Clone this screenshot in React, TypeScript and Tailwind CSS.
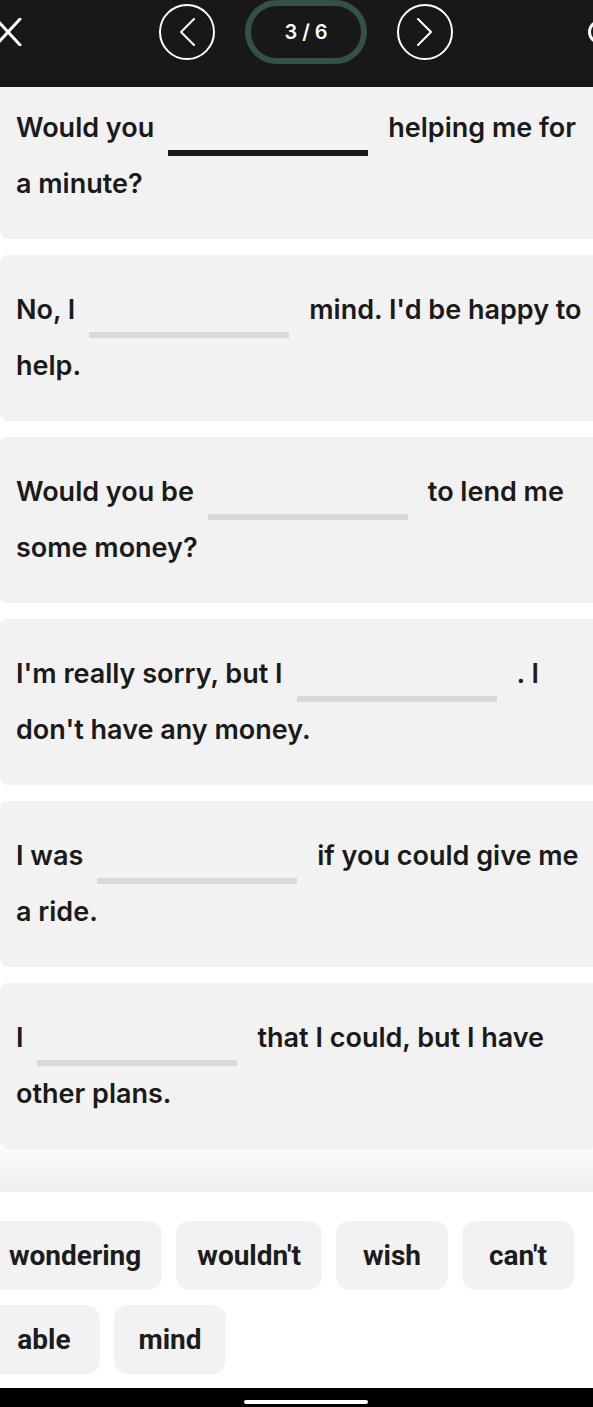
const sentences = [
  { before: "Would you", after: "helping me for", next: "a minute?", active: true },
  { before: "No, I", after: "mind. I'd be happy to", next: "help.", active: false },
  { before: "Would you be", after: "to lend me", next: "some money?", active: false },
  { before: "I'm really sorry, but I", after: ". I", next: "don't have any money.", active: false },
  { before: "I was", after: "if you could give me", next: "a ride.", active: false },
  { before: "I", after: "that I could, but I have", next: "other plans.", active: false },
];

const words = ["wondering", "wouldn't", "wish", "can't", "able", "mind"];

const App = () => {
  return (
    <div className="w-full overflow-hidden bg-white">
      <div className="w-[650px] -ml-[19px]">
        {/* Top bar */}
        <div className="h-[87px] bg-[#181818] overflow-hidden">
          <div className="h-[62px] grid grid-cols-[1fr_auto_1fr] items-center">
            <div className="ml-[13px]">
              <svg width="28" height="28" viewBox="0 0 28 28" fill="none" stroke="white" strokeWidth="3" strokeLinecap="round">
                <path d="M2 1L26 27M26 1L2 27" />
              </svg>
            </div>
            <div className="flex items-center gap-[30px]">
              <button className="w-[56px] h-[56px] rounded-full border-2 border-white flex items-center justify-center">
                <svg width="18" height="28" viewBox="0 0 18 28" fill="none" stroke="white" strokeWidth="2" strokeLinecap="round" strokeLinejoin="round">
                  <path d="M16 1L3 14L16 27" />
                </svg>
              </button>
              <div className="w-[122px] h-[64px] rounded-full border-[6px] border-[#33504a] flex items-center justify-center text-white text-[20px] font-semibold font-['Inter',sans-serif]">
                3 / 6
              </div>
              <button className="w-[56px] h-[56px] rounded-full border-2 border-white flex items-center justify-center">
                <svg width="18" height="28" viewBox="0 0 18 28" fill="none" stroke="white" strokeWidth="2" strokeLinecap="round" strokeLinejoin="round">
                  <path d="M2 1L15 14L2 27" />
                </svg>
              </button>
            </div>
            <div className="justify-self-end mr-[19px]">
              <div className="w-[24px] h-[24px] rounded-full border-[3px] border-white" />
            </div>
          </div>
        </div>

        {/* Sentences */}
        <div className="ml-[19px] flex flex-col gap-[16px]">
          {sentences.map((s, i) => (
            <div
              key={i}
              className={`bg-[#f2f2f2] pl-[16px] pb-[27px] text-[#1a1a1a] font-['Inter',sans-serif] font-semibold text-[27px] leading-[56px] ${
                i === 0 ? "pt-[13px] rounded-bl-lg" : "pt-[27px] rounded-l-lg"
              }`}
            >
              <div className="whitespace-nowrap">
                <span>{s.before}</span>
                <span
                  className={`inline-block w-[200px] h-[40px] align-bottom ml-[14px] mr-[20px] border-b-[6px] ${
                    s.active ? "border-[#1a1a1a]" : "border-[#d9d9d9]"
                  }`}
                />
                <span>{s.after}</span>
              </div>
              <div className="whitespace-nowrap">{s.next}</div>
            </div>
          ))}
        </div>

        <div className="ml-[19px] h-[43px] bg-gradient-to-b from-[#fbfbfb] to-[#efefef]" />

        {/* Word bank */}
        <div className="ml-[7px] pt-[29px] pb-[14px] flex flex-wrap gap-x-[14px] gap-y-[15px] w-[605px]">
          {words.map((w) => (
            <button
              key={w}
              className="h-[69px] min-w-[112px] px-[21px] rounded-[14px] bg-[#f2f2f2] text-[#1c1c1c] font-['Roboto',sans-serif] font-bold text-[28px] flex items-center justify-center"
            >
              {w}
            </button>
          ))}
        </div>

        {/* System bar */}
        <div className="h-[19px] bg-black flex justify-center items-end pb-[3px]">
          <div className="w-[124px] h-[4px] rounded-full bg-white" />
        </div>
      </div>
    </div>
  );
};

export default App;
